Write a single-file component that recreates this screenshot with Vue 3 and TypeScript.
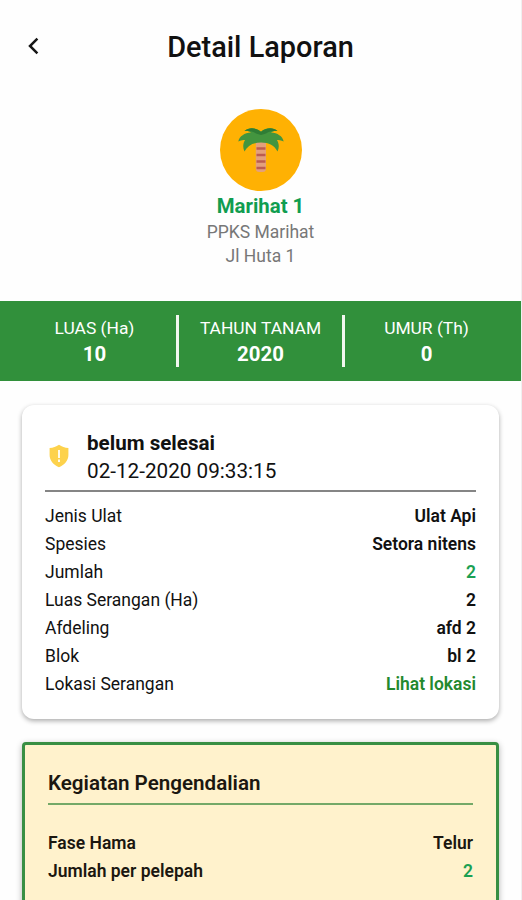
<script setup lang="ts">
interface Stat {
  label: string
  value: string
}

interface Row {
  label: string
  value: string
  tone?: 'teal' | 'link'
}

const stats: Stat[] = [
  { label: 'LUAS (Ha)', value: '10' },
  { label: 'TAHUN TANAM', value: '2020' },
  { label: 'UMUR (Th)', value: '0' },
]

const rows: Row[] = [
  { label: 'Jenis Ulat', value: 'Ulat Api' },
  { label: 'Spesies', value: 'Setora nitens' },
  { label: 'Jumlah', value: '2', tone: 'teal' },
  { label: 'Luas Serangan (Ha)', value: '2' },
  { label: 'Afdeling', value: 'afd 2' },
  { label: 'Blok', value: 'bl 2' },
  { label: 'Lokasi Serangan', value: 'Lihat lokasi', tone: 'link' },
]

const controlRows: Row[] = [
  { label: 'Fase Hama', value: 'Telur' },
  { label: 'Jumlah per pelepah', value: '2', tone: 'teal' },
]
</script>

<template>
  <main class="screen">
    <header class="bar">
      <button class="back" type="button">
        <svg viewBox="0 0 12 18" width="12" height="18">
          <path d="M10.400 1.600 3 9l7.400 7.400" fill="none" stroke="#161616" stroke-width="2.500" />
        </svg>
      </button>
      <h1 class="title">Detail Laporan</h1>
    </header>

    <section class="profile">
      <div class="avatar">
        <svg viewBox="0 0 48 48" width="48" height="48">
          <rect x="18.800" y="14" width="10.200" height="32" rx="3.500" fill="#e3a07c" />
          <path d="M19.500 22.500h9M19.500 29h9M19.500 35.500h9M19.500 42h9" stroke="#bb5c50" stroke-width="2.300" />
          <path
            d="M24 5.500C19 1.500 12 1 7.500 5c3-.3 5 .2 6.500 1.500C7.500 7 2.500 10 1.300 15.500c2.200-1.300 4.500-1.800 6.700-1.500C6 17.500 5.500 21.500 7.500 25.500 10.500 19.500 16 16.500 24 16.500s13.500 3 16.500 9C42.500 21.500 42 17.500 40 14c2.200-.3 4.500.2 6.700 1.500C45.500 10 40.500 7 34 6.500c1.500-1.300 3.500-1.800 6.500-1.500C36 1 29 1.500 24 5.500Z"
            fill="#43953f"
          />
          <path
            d="M24 6C19 1.500 12 1 7.500 5c4-.8 8 .2 11.500 2.500L24 9l5-1.500C32.500 5.200 36.500 4.200 40.500 5 36 1 29 1.500 24 6Z"
            fill="#2f7d35"
          />
        </svg>
      </div>
      <h2 class="name">Marihat 1</h2>
      <p class="sub">PPKS Marihat</p>
      <p class="sub">Jl Huta 1</p>
    </section>

    <section class="stats">
      <div v-for="s in stats" :key="s.label" class="stat">
        <span class="stat-label">{{ s.label }}</span>
        <strong class="stat-value">{{ s.value }}</strong>
      </div>
    </section>

    <section class="card">
      <div class="status">
        <svg class="shield" viewBox="0 0 20 24" width="20" height="24">
          <path d="M10 .8c2.800 1.900 5.900 3 9.400 3.200v7c0 5.200-3.700 9.800-9.400 12.200C4.300 20.800.6 16.200.6 11V4C4.100 3.800 7.200 2.700 10 .8Z" fill="#fdd24c" />
          <path d="M10 6v8M10 15.600v2.400" stroke="#fffbe9" stroke-width="2" />
        </svg>
        <div>
          <p class="state">belum selesai</p>
          <p class="date">02-12-2020 09:33:15</p>
        </div>
      </div>
      <div v-for="r in rows" :key="r.label" class="row">
        <span>{{ r.label }}</span>
        <strong class="val" :class="r.tone">{{ r.value }}</strong>
      </div>
    </section>

    <section class="control">
      <h3 class="control-title">Kegiatan Pengendalian</h3>
      <div v-for="r in controlRows" :key="r.label" class="row strong">
        <span>{{ r.label }}</span>
        <strong class="val" :class="r.tone">{{ r.value }}</strong>
      </div>
    </section>
  </main>
</template>

<style>
body {
  margin: 0;
  overflow: hidden;
}
</style>

<style scoped>
.screen {
  box-sizing: border-box;
  height: 900px;
  overflow: hidden;
  background: #fefefe;
  border-right: 1px solid #f0f0f0;
  color: #111;
  font-family: Roboto, 'Liberation Sans', sans-serif;
}
h1, h2, h3, p {
  margin: 0;
}
.bar {
  display: grid;
  grid-template-columns: 60px 1fr 60px;
  align-items: center;
  height: 93px;
}
.back {
  display: flex;
  padding: 0 0 2px 27px;
  border: 0;
  background: none;
}
.title {
  text-align: center;
  font-size: 28.9px;
  line-height: 34px;
  font-weight: 500;
}
.profile {
  display: flex;
  flex-direction: column;
  align-items: center;
  height: 192px;
  padding-top: 16px;
}
.avatar {
  display: flex;
  align-items: center;
  justify-content: center;
  width: 82px;
  height: 82px;
  border-radius: 50%;
  background: #ffb103;
}
.name {
  margin-top: 3px;
  font-size: 20.4px;
  line-height: 24px;
  font-weight: 700;
  color: #109d50;
}
.sub {
  font-size: 17.5px;
  line-height: 24px;
  color: #777;
}
.profile .name + .sub {
  margin-top: 2px;
}
.stats {
  box-sizing: border-box;
  display: grid;
  grid-template-columns: repeat(3, 166px);
  height: 80px;
  padding: 14px 0 14px 13px;
  background: #31903b;
  color: #fff;
}
.stat {
  box-sizing: border-box;
  display: flex;
  flex-direction: column;
  align-items: center;
  border-right: 3px solid #f2f7ef;
}
.stat:last-child {
  border-right-color: transparent;
}
.stat-label {
  font-size: 17.4px;
  line-height: 26px;
}
.stat-value {
  font-size: 20.4px;
  line-height: 26px;
}
.card {
  box-sizing: border-box;
  width: 477px;
  height: 314px;
  margin: 24px 0 0 22px;
  padding: 24px 23px 0;
  border-radius: 12px;
  background: #fff;
  box-shadow: 0 2px 5px rgba(0, 0, 0, 0.33);
}
.status {
  box-sizing: border-box;
  display: flex;
  align-items: center;
  height: 63px;
  margin-bottom: 10px;
  padding-bottom: 5px;
  border-bottom: 2px solid #858585;
}
.shield {
  margin: 0 18px 3px 4px;
}
.state {
  font-size: 20.6px;
  line-height: 28px;
  font-weight: 700;
}
.date {
  font-size: 20.7px;
  line-height: 28px;
}
.row {
  display: flex;
  justify-content: space-between;
  font-size: 17.5px;
  line-height: 28px;
}
.val {
  font-weight: 600;
}
.teal {
  color: #1ba052;
}
.link {
  color: #23892e;
}
.control {
  box-sizing: border-box;
  width: 477px;
  height: 220px;
  margin: 23px 0 0 22px;
  padding: 24px 23px 0;
  border: 3px solid #388f43;
  border-radius: 4px;
  background: #fff2cc;
  box-shadow: 0 2px 6px rgba(0, 0, 0, 0.3);
  color: #1b1710;
}
.control-title {
  box-sizing: border-box;
  height: 36px;
  margin-bottom: 24px;
  border-bottom: 2px solid #74a968;
  font-size: 20.6px;
  line-height: 28px;
  font-weight: 600;
}
.strong {
  font-weight: 600;
}
</style>
